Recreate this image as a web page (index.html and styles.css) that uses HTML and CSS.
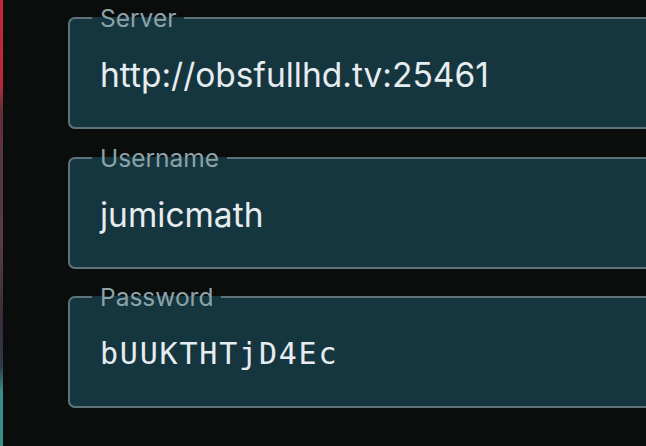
FILE: index.html
```html
<!DOCTYPE html>
<html lang="en">
<head>
<meta charset="utf-8">
<title>Account</title>
<link rel="stylesheet" href="styles.css">
</head>
<body>
<div class="screen">
  <div class="edge"></div>
  <form class="login">
    <fieldset class="field">
      <legend class="field-label">Server</legend>
      <div class="field-value">http://obsfullhd.tv:25461</div>
    </fieldset>
    <fieldset class="field">
      <legend class="field-label">Username</legend>
      <div class="field-value">jumicmath</div>
    </fieldset>
    <fieldset class="field">
      <legend class="field-label">Password</legend>
      <div class="field-value mono">bUUKTHTjD4Ec</div>
    </fieldset>
  </form>
</div>
</body>
</html>
```

FILE: styles.css
```css
html, body {
  margin: 0;
  padding: 0;
  background: #0b0c0c;
  overflow: hidden;
}

.screen {
  display: flex;
  width: 646px;
  height: 446px;
  overflow: hidden;
}

/* thin strip of the neighbouring panel on the left */
.edge {
  flex: 0 0 3px;
  background: linear-gradient(to bottom,
    #c42638 0%, #b8283a 19%, #5e3138 25%, #563c44 55%,
    #3a2c3a 72%, #2f3a44 82%, #3a8f8c 88%, #3c8e8a 100%);
}

.login {
  display: flex;
  flex-direction: column;
  gap: 15.5px;
  padding: 5px 0 0 65px;
  font-family: Inter, "Noto Sans", sans-serif;
}

.field {
  width: 680px;
  height: 124px;
  margin: 0;
  padding: 0 0 0 30px;
  box-sizing: border-box;
  background: #16363f;
  border: 2px solid #5d7378;
  border-radius: 7px;
}

.field-label {
  margin-left: -8px;
  padding: 0 8px;
  font-size: 24.5px;
  line-height: 26px;
  color: #8ba3a8;
}

.field-value {
  padding-top: 24px;
  font-size: 33.5px;
  line-height: 40px;
  color: #e6ecef;
}

.field-value.mono {
  font-family: "DejaVu Sans Mono", monospace;
  font-size: 30px;
  letter-spacing: 1.8px;
}
```
